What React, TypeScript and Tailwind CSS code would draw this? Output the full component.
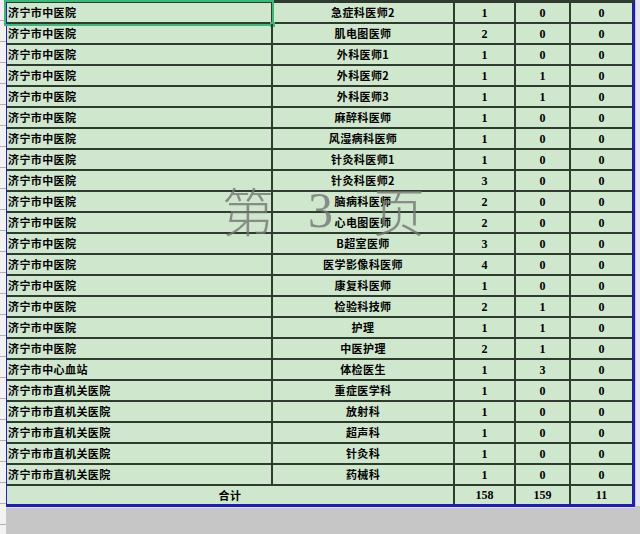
const rows: [string, string, number, number, number][] = [
  ["济宁市中医院", "急症科医师2", 1, 0, 0],
  ["济宁市中医院", "肌电图医师", 2, 0, 0],
  ["济宁市中医院", "外科医师1", 1, 0, 0],
  ["济宁市中医院", "外科医师2", 1, 1, 0],
  ["济宁市中医院", "外科医师3", 1, 1, 0],
  ["济宁市中医院", "麻醉科医师", 1, 0, 0],
  ["济宁市中医院", "风湿病科医师", 1, 0, 0],
  ["济宁市中医院", "针灸科医师1", 1, 0, 0],
  ["济宁市中医院", "针灸科医师2", 3, 0, 0],
  ["济宁市中医院", "脑病科医师", 2, 0, 0],
  ["济宁市中医院", "心电图医师", 2, 0, 0],
  ["济宁市中医院", "B超室医师", 3, 0, 0],
  ["济宁市中医院", "医学影像科医师", 4, 0, 0],
  ["济宁市中医院", "康复科医师", 1, 0, 0],
  ["济宁市中医院", "检验科技师", 2, 1, 0],
  ["济宁市中医院", "护理", 1, 1, 0],
  ["济宁市中医院", "中医护理", 2, 1, 0],
  ["济宁市中心血站", "体检医生", 1, 3, 0],
  ["济宁市市直机关医院", "重症医学科", 1, 0, 0],
  ["济宁市市直机关医院", "放射科", 1, 0, 0],
  ["济宁市市直机关医院", "超声科", 1, 0, 0],
  ["济宁市市直机关医院", "针灸科", 1, 0, 0],
  ["济宁市市直机关医院", "药械科", 1, 0, 0],
];

const cjk = { fontFamily: '"Noto Sans CJK SC", sans-serif' };
const num = { fontFamily: '"Liberation Serif", serif' };

export default function App() {
  return (
    <div className="relative flex h-[534px] w-[640px] overflow-hidden bg-[#c6c6c6]">
      {/* row headers, cut off */}
      <div className="flex w-[6px] flex-col bg-[#f2f2f2]">
        {Array.from({ length: 26 }).map((_, i) => (
          <div key={i} className="h-[21px] shrink-0 border-b border-[#b0b0b8]" />
        ))}
      </div>

      <div className="flex w-[629px] flex-col">
        <div className="border-t-[3px] border-l border-r-[3px] border-b-[3px] border-t-[#2e3b2e] border-l-[#2424b8] border-r-[#1c1cc0] border-b-[#1c1cc0] bg-[#cfe7cd] text-black">
          {rows.map((r, i) => (
            <div key={i} className="relative flex h-[21px] border-b-2 border-[#2e3b2e]">
              <div className="flex w-[266px] items-center border-r-2 border-[#2e3b2e] pl-[1px] text-[11px] font-bold tracking-[0.4px]" style={cjk}>
                {r[0]}
              </div>
              <div className="flex w-[182px] items-center justify-center border-r-2 border-[#2e3b2e] text-[11px] font-bold tracking-[0.4px]" style={cjk}>
                {r[1]}
              </div>
              <div className="flex w-[61px] items-center justify-center border-r-2 border-[#2e3b2e] text-[12px] font-bold" style={num}>
                {r[2]}
              </div>
              <div className="flex w-[55px] items-center justify-center border-r-2 border-[#2e3b2e] text-[12px] font-bold" style={num}>
                {r[3]}
              </div>
              <div className="flex w-[61px] items-center justify-center text-[12px] font-bold" style={num}>
                {r[4]}
              </div>
              {i === 0 && (
                <div className="pointer-events-none absolute -top-[3px] -left-[3px] h-[26px] w-[270px] border-2 border-[#3cb878]">
                  <div className="absolute -right-[3px] -bottom-[3px] h-[5px] w-[5px] bg-[#3cb878]" />
                </div>
              )}
            </div>
          ))}
          <div className="flex h-[18px]">
            <div className="flex w-[448px] items-center justify-center border-r-2 border-[#2e3b2e] text-[11px] font-bold tracking-[0.4px]" style={cjk}>
              合计
            </div>
            <div className="flex w-[61px] items-center justify-center border-r-2 border-[#2e3b2e] text-[12px] font-bold" style={num}>
              158
            </div>
            <div className="flex w-[55px] items-center justify-center border-r-2 border-[#2e3b2e] text-[12px] font-bold" style={num}>
              159
            </div>
            <div className="flex w-[61px] items-center justify-center text-[12px] font-bold" style={num}>
              11
            </div>
          </div>
        </div>
        <div className="flex-1 border-t border-[#dcdcdc] bg-[#c6c6c6]" />
      </div>

      <div className="flex w-[5px] flex-col">
        <div className="h-[506px] border-l border-[#c8c8dc] bg-[#e6e6ee]" />
        <div className="flex-1 bg-[#c6c6c6]" />
      </div>

      {/* page watermark */}
      <div className="pointer-events-none absolute top-[184px] left-[222px] flex items-center text-[#767676] opacity-80">
        <span className="text-[52px] leading-none font-light" style={cjk}>第</span>
        <span className="ml-[34px] text-[50px] leading-none" style={num}>3</span>
        <span className="ml-[40px] text-[52px] leading-none font-light" style={cjk}>页</span>
      </div>
    </div>
  );
}
